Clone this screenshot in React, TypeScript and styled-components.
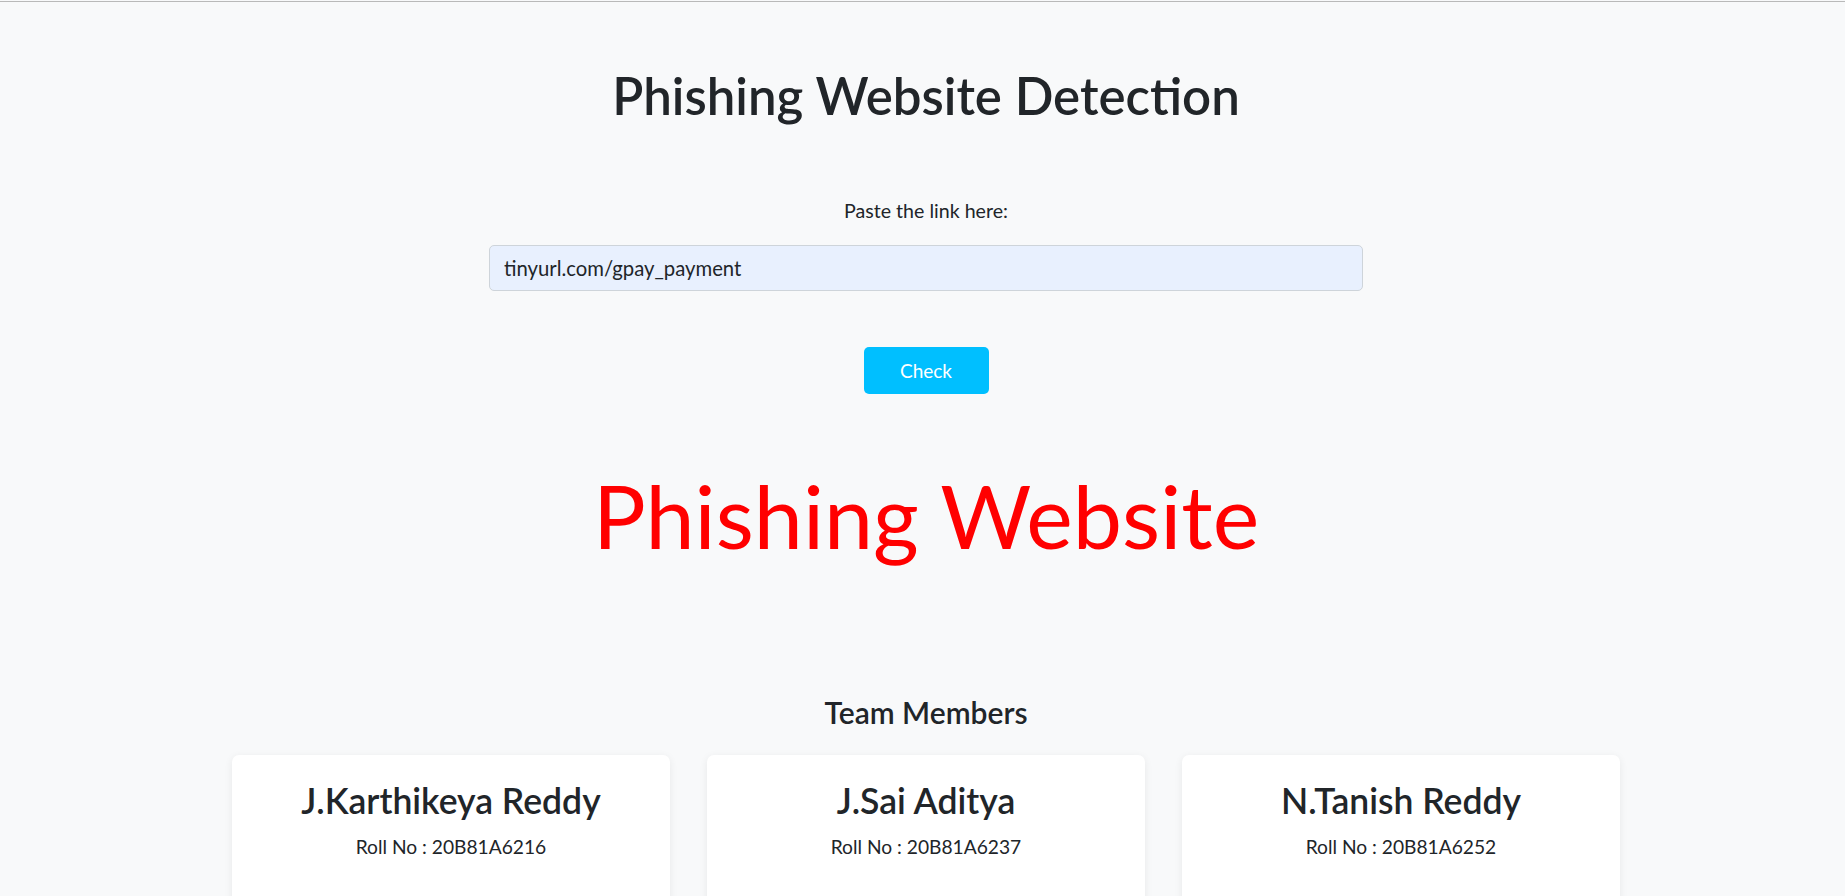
import React, { useState } from 'react';
import styled, { createGlobalStyle } from 'styled-components';

const members = [
  { name: 'J.Karthikeya Reddy', roll: '20B81A6216' },
  { name: 'J.Sai Aditya', roll: '20B81A6237' },
  { name: 'N.Tanish Reddy', roll: '20B81A6252' },
];

export default function App() {
  const [url, setUrl] = useState('tinyurl.com/gpay_payment');

  return (
    <>
      <GlobalStyle />
      <Page>
        <Title>Phishing Website Detection</Title>
        <Form onSubmit={(e) => e.preventDefault()}>
          <Label htmlFor="url">Paste the link here:</Label>
          <UrlInput
            id="url"
            type="text"
            value={url}
            onChange={(e) => setUrl(e.target.value)}
          />
          <CheckButton type="submit">Check</CheckButton>
        </Form>
        <Result phishing>Phishing Website</Result>
        <TeamTitle>Team Members</TeamTitle>
        <Cards>
          {members.map((m) => (
            <Card key={m.roll}>
              <MemberName>{m.name}</MemberName>
              <Roll>Roll No : {m.roll}</Roll>
            </Card>
          ))}
        </Cards>
      </Page>
    </>
  );
}

const GlobalStyle = createGlobalStyle`
  html, body {
    margin: 0;
    background-color: #f8f9fa;
  }
  body {
    font-family: Lato, "Open Sans", sans-serif;
    color: #212529;
    line-height: 1.2;
  }
  * {
    box-sizing: border-box;
  }
`;

const Page = styled.div`
  margin-top: 1px;
  border-top: 1px solid #b9b9b9;
  padding-left: 7px;
  min-height: 894px;
  display: flex;
  flex-direction: column;
  align-items: center;
  overflow: hidden;
`;

const Title = styled.h1`
  margin: 63px 0 0;
  font-size: 51px;
  font-weight: 600;
  line-height: 1.2;
  color: #212529;
`;

const Form = styled.form`
  display: flex;
  flex-direction: column;
  align-items: center;
  margin-top: 72.5px;
`;

const Label = styled.label`
  font-size: 19.6px;
  line-height: 1.2;
`;

const UrlInput = styled.input`
  margin-top: 23px;
  width: 874px;
  height: 46px;
  padding: 0 14px;
  font-family: inherit;
  font-size: 20.3px;
  color: #212529;
  background-color: #e8f0fe;
  border: 1px solid #ced4da;
  border-radius: 5px;
  outline: none;
`;

const CheckButton = styled.button`
  margin-top: 56px;
  width: 125px;
  height: 47px;
  font-family: inherit;
  font-size: 19px;
  color: #fff;
  background-color: #00bfff;
  border: none;
  border-radius: 5px;
  cursor: pointer;
`;

const Result = styled.div<{ phishing?: boolean }>`
  margin-top: 69px;
  font-size: 88px;
  line-height: 1.2;
  color: ${({ phishing }) => (phishing ? '#ff0000' : '#198754')};
`;

const TeamTitle = styled.h3`
  margin: 125px 0 0;
  font-size: 30px;
  font-weight: 600;
  line-height: 1.2;
`;

const Cards = styled.div`
  display: flex;
  gap: 37px;
  margin-top: 25px;
`;

const Card = styled.div`
  width: 438px;
  padding: 25px 16px 60px;
  background-color: #fff;
  border-radius: 7px;
  box-shadow: 0 2px 8px rgba(0, 0, 0, 0.07);
  text-align: center;
`;

const MemberName = styled.h2`
  margin: 0;
  font-size: 35.5px;
  font-weight: 600;
  line-height: 1.2;
`;

const Roll = styled.p`
  margin: 13px 0 0;
  font-size: 19.2px;
  line-height: 1.2;
`;
